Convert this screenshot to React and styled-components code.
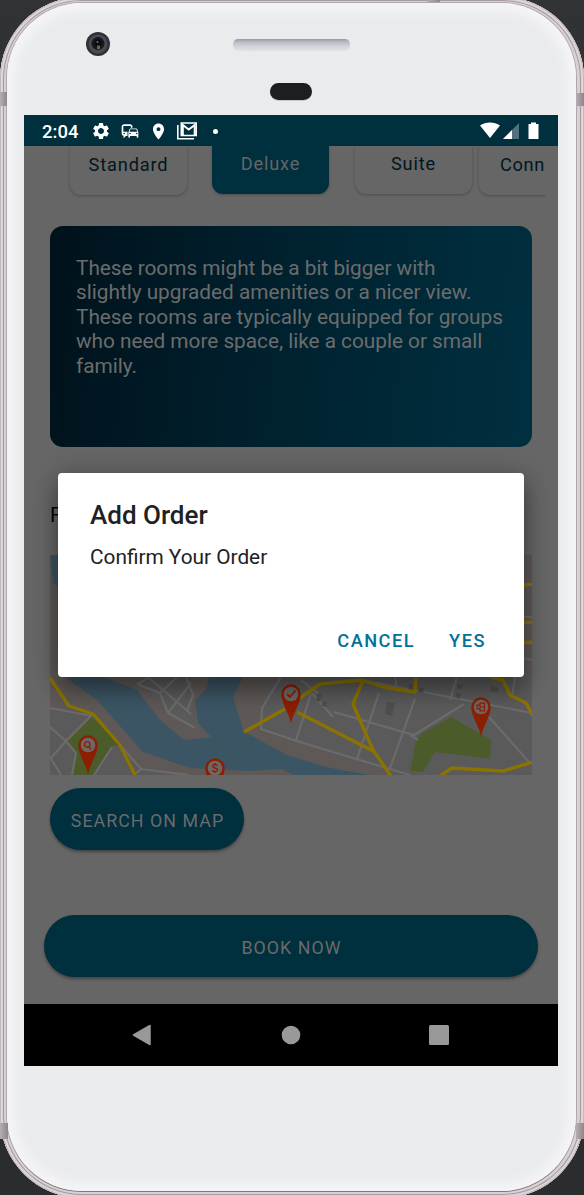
import React from "react";
import styled, { createGlobalStyle } from "styled-components";
import { MdSettings, MdCommute, MdLocationOn } from "react-icons/md";

const GlobalStyle = createGlobalStyle`
  * { box-sizing: border-box; }
  body { margin: 0; background: linear-gradient(#303233, #2a2c2d); font-family: Roboto, "Liberation Sans", sans-serif; }
`;

const Stage = styled.main`
  position: relative;
  width: 584px;
  height: 1195px;
  overflow: hidden;
`;

const Rim = styled.div`
  width: 584px;
  height: 1201px;
  margin-top: -3px;
  padding: 6px 8px 7px 7px;
  border-radius: 82px;
  background: #d8d1d4;
  box-shadow: inset 0 0 0 1px #c0b8bc, inset 0 0 2px 2px #e4dee1, inset 0 0 0 3px #d5ced1, inset 0 0 0 4px #a0969c;
`;

const Face = styled.div`
  height: 100%;
  padding: 0 17px;
  border-radius: 75px;
  background: #eaebed;
  box-shadow: 0 1px 0 0 #82787e, 0 0 0 1px #b0a7ac, inset 0 0 11px 8px #f5f5f8;
  display: flex;
  flex-direction: column;
`;

const Forehead = styled.div`
  position: relative;
  flex: 0 0 112px;
`;

const Camera = styled.svg`
  position: absolute;
  left: 61px;
  top: 28px;
`;

const Speaker = styled.div`
  position: absolute;
  left: 209px;
  top: 36px;
  width: 117px;
  height: 11px;
  border-radius: 5px;
  background: linear-gradient(#959aa4, #b9bdc5 30%, #d0d3d9 65%, #dcdee2);
  box-shadow: 0 1px 1px #dfe1e4;
`;

const Sensor = styled.div`
  position: absolute;
  left: 246px;
  top: 80px;
  width: 42px;
  height: 17px;
  border-radius: 9px;
  background: #1d1e21;
  box-shadow: 0 1px 0 #c5c6c9;
`;

const Band = styled.span`
  position: absolute;
  left: ${(p) => p.$x}px;
  top: ${(p) => p.$y}px;
  width: ${(p) => p.$w}px;
  height: ${(p) => p.$h}px;
  background: linear-gradient(90deg, #b5adb2, #8f868c);
`;

const Screen = styled.section`
  position: relative;
  height: 951px;
  width: 534px;
  flex: none;
  background: #666;
  overflow: hidden;
  display: flex;
  flex-direction: column;
`;

const StatusBar = styled.header`
  flex: 0 0 31px;
  height: 31px;
  background: #002f3e;
  color: #fff;
  display: flex;
  align-items: center;
  padding: 0 19px 0 18px;
  font-size: 18.5px;
  font-weight: 500;
`;

const Clock = styled.span`
  width: 49px;
  line-height: 27px;
  padding-top: 4px;
`;

const StatusIcons = styled.div`
  display: flex;
  align-items: center;
  gap: 9px;
  flex: 1;
  padding-top: 1px;
`;

const Dot = styled.i`
  width: 5px;
  height: 5px;
  border-radius: 50%;
  background: #fff;
  margin-left: 7px;
`;

const Tabs = styled.nav`
  display: flex;
  flex: 0 0 60px;
  align-items: flex-start;
  width: 521px;
  padding-left: 46px;
  overflow: hidden;
`;

const Tab = styled.div`
  flex: 0 0 117px;
  height: ${(p) => p.$h}px;
  margin-right: ${(p) => p.$gap}px;
  padding-top: ${(p) => p.$h - 41}px;
  border-radius: 0 0 11px 11px;
  text-align: center;
  font-size: 18.2px;
  line-height: 22px;
  letter-spacing: 0.85px;
  color: ${(p) => (p.$active ? "#666" : "#001620")};
  background: ${(p) => (p.$active ? "#002f3e" : "#666")};
  box-shadow: 0 1px 3px rgba(0, 0, 0, 0.25);
`;

const PeekTab = styled(Tab)`
  padding-left: 21px;
  text-align: left;
  letter-spacing: 0.65px;
`;

const Description = styled.p`
  margin: 20px 26px 0;
  flex: 0 0 221px;
  padding: 30px 0 0 26px;
  border-radius: 13px;
  background: linear-gradient(96deg, #00121b, #002230 50%, #003040);
  color: #6b6c6c;
  font-size: 20.8px;
  line-height: 24.45px;
  letter-spacing: -0.02px;
  white-space: nowrap;
`;

const SectionTitle = styled.h2`
  margin: 56px 26px 0;
  flex: 0 0 52px;
  font-size: 20.8px;
  line-height: 24px;
  font-weight: 400;
  color: #050505;
`;

const MapPicture = styled.svg`
  flex: none;
  margin-left: 26px;
  display: block;
`;

const PillButton = styled.button`
  flex: none;
  width: ${(p) => p.$w}px;
  height: ${(p) => p.$h}px;
  margin: ${(p) => p.$m};
  padding: 2px 0 0 1px;
  border: 0;
  border-radius: 32px;
  background: #002f3e;
  color: #6a6b6c;
  font: 400 17.8px Roboto, sans-serif;
  letter-spacing: 1.05px;
  white-space: nowrap;
  box-shadow: 0 2px 3px rgba(0, 0, 0, 0.35);
`;

const NavBar = styled.footer`
  margin-top: auto;
  flex: 0 0 62px;
  background: #000;
  display: flex;
  align-items: center;
  justify-content: space-between;
  padding: 0 109px 0 108px;
`;

const Dialog = styled.div`
  position: absolute;
  left: 34px;
  top: 358px;
  width: 466px;
  height: 204px;
  padding: 26px 32px 0;
  border-radius: 4px;
  background: #fff;
  color: #212121;
  box-shadow: 0 14px 22px rgba(0, 0, 0, 0.33), 0 0 28px rgba(0, 0, 0, 0.2);
  display: flex;
  flex-direction: column;
`;

const DialogTitle = styled.h1`
  margin: 0;
  font-size: 26px;
  line-height: 32px;
  font-weight: 500;
`;

const DialogText = styled.p`
  margin: 13px 0 0;
  font-size: 20.8px;
  line-height: 26px;
`;

const DialogActions = styled.div`
  display: flex;
  justify-content: flex-end;
  gap: 34px;
  margin-top: 59px;
  padding-right: 6px;
`;

const TextButton = styled.button`
  border: 0;
  padding: 0;
  background: none;
  color: #00729a;
  font: 500 18.2px/24px Roboto, sans-serif;
  letter-spacing: 1.5px;
`;

function Pin({ x, y, children }) {
  return (
    <g transform={`translate(${x} ${y})`}>
      <path d="M0 29.5 C-2 19 -9.7 9 -9.7 0 A9.7 9.7 0 0 1 9.7 0 C9.7 9 2 19 0 29.5Z" fill="#8c1e02" />
      <circle r="7.300" fill="#6c6866" />
      <g fill="none" stroke="#8c1e02" strokeWidth="1.400">{children}</g>
    </g>
  );
}

function CityMap() {
  return (
    <MapPicture width="482" height="220" viewBox="50 555 482 220">
      <path fill="#5e5956" d="M50 555H532V775H50Z" />
      <path fill="#5b5a5a" d="M50 707L93 716 66 740 76 753 72 775H50Z M111 746L120 748 132 775H93Z M137 677H188L195 729 167 714Z M262 684L282 677H532V775H391L260 728Z M141 769L190 775H139Z" />
      <path fill="#3c5564" d="M50 555H62V589L53 583Z M65 677L97 700 143 752 190 768 250 771 282 769 293 775H370L330 768 287 755 244 732 233 697 243 677H209L207 688 195 701 198 723 211 737 184 740 160 720 137 690 103 677Z" />
      <path fill="#4b5b2a" d="M91 716L66 740 76 753 72 775H93L112 746 120 745Z M416 740L423 733 451 717 491 740 490 759 435 752 423 772 410 771Z" />
      <g fill="none" stroke="#6b6b6b" strokeWidth="2.200">
        <path d="M50 708L92 716M50 727L66 741 50 759M66 741L76 753 72 775M50 757L61 775M91 716L66 741M94 775L112 747M121 746L141 769 134 775M141 769L189 775" />
        <path d="M137 684L150 677M137 684L160 693 168 713 195 728M160 693L177 677M168 713L191 683M148 677L191 714M186 677L193 695 187 711" />
        <path d="M281 677L262 708 261 729 291 739M290 739L373 764 410 775M296 740L311 694M357 759L379 693M390 768L415 699M334 712L414 735 464 704M312 693L333 717M361 680L532 713M450 700L457 677M512 697L515 677M301 680L320 695M489 717L529 762M395 677L397 687M410 735L418 740M523 617H532M523 658L532 660" />
      </g>
      <path fill="#4e4e4e" d="M318 693L322 694 320 702 316 700Z M323 701L327 702 326 707 322 706Z M387 702L395 703 392 716 385 714Z M419 687L424 688 423 693 418 692Z M409 684L413 685V690L408 689Z M458 684L463 685 462 689 457 688Z M457 693L461 694 460 699 455 697Z M491 686L499 688 497 693 490 691Z" />
      <g fill="none" stroke="#8a7300" strokeWidth="3.400" strokeLinejoin="round">
        <path d="M50 678L69 706 93 714 120 745 135 775M244 732L285 709M300 698L320 684 362 680 383 687 415 692 416 677M363 680L353 704 373 750 391 776M297 712L373 751M490 677L503 680 510 695 526 703 533 716M440 776L452 768 503 771 533 762M523 585L533 584M523 622.500H533M523 642.500H533" />
      </g>
      <Pin x={88} y={745}>
        <circle cx="-.8" cy="-.6" r="2.800" /><path d="M1 1.500L3 4.500" />
      </Pin>
      <Pin x={215} y={768}>
        <path d="M2.600-2.400C1.500-3.800-2.400-3.500-2.200-1.400C-2 .5 2.600-.4 2.500 2C2.300 4-1.700 4-2.800 2.500M0-5V-3M0 3V5" />
      </Pin>
      <Pin x={291} y={694}><path strokeWidth="1.800" d="M-4 0L-1 3 4.500-3.500" /></Pin>
      <Pin x={481} y={707}><path strokeWidth="1.200" d="M-1-3.800H3.500V3.800H-1ZM-1-1.800H-4V1.800H-1M-1 0H3.500" /></Pin>
    </MapPicture>
  );
}

function StackedMailIcon() {
  return (
    <svg width="20" height="18" viewBox="0 0 20 18" fill="none" stroke="#fff" strokeWidth="1.600">
      <path d="M.8 3V16.700H17" />
      <path d="M4.300 1H19.200V13.500H4.300Z" />
      <path d="M5.800 13V3L11.750 7.500 17.700 3V13" strokeWidth="2" />
    </svg>
  );
}

function SystemIcons() {
  return (
    <svg width="59" height="18" viewBox="0 0 59 18" fill="#fff">
      <path d="M0 3.500C5.500-.6 14.500-.6 20 3.500L10 16Z" />
      <path d="M39 1V17H23Z" opacity=".32" />
      <path d="M32 8V17H23Z" />
      <path d="M51 .5H56V2H58.500V17H48.500V2H51Z" />
    </svg>
  );
}

function CameraLens() {
  return (
    <Camera width="26" height="26" viewBox="0 0 26 26">
      <circle cx="13" cy="13" r="12" fill="#303136" />
      <circle cx="13" cy="13" r="9.500" fill="#4b4c51" />
      <circle cx="13" cy="12.500" r="6.500" fill="#17181d" />
      <circle cx="13" cy="12" r="3.500" fill="#080a12" />
      <circle cx="12.500" cy="11" r="1" fill="#6c7188" />
      <path d="M12 14.500H15V18H12Z" fill="#6e692f" />
    </Camera>
  );
}

export default function App() {
  return (
    <Stage>
      <GlobalStyle />
      <Rim>
        <Face>
          <Forehead>
            <CameraLens />
            <Speaker />
            <Sensor />
          </Forehead>
          <Screen>
            <StatusBar>
              <Clock>2:04</Clock>
              <StatusIcons>
                <MdSettings size={20} />
                <MdCommute size={20} />
                <MdLocationOn size={19} />
                <StackedMailIcon />
                <Dot />
              </StatusIcons>
              <SystemIcons />
            </StatusBar>
            <Tabs>
              <Tab $h={49} $gap={25}>Standard</Tab>
              <Tab $h={48} $gap={26} $active>Deluxe</Tab>
              <Tab $h={48} $gap={7}>Suite</Tab>
              <PeekTab $h={49} $gap={0}>Conn</PeekTab>
            </Tabs>
            <Description>
              These rooms might be a bit bigger with<br />
              slightly upgraded amenities or a nicer view.<br />
              These rooms are typically equipped for groups<br />
              who need more space, like a couple or small<br />
              family.
            </Description>
            <SectionTitle>F</SectionTitle>
            <CityMap />
            <PillButton $w={194} $h={62} $m="13px 0 0 26px">SEARCH ON MAP</PillButton>
            <PillButton $w={494} $h={62} $m="65px 0 0 20px">BOOK NOW</PillButton>
            <NavBar>
              <svg width="20" height="22" viewBox="0 0 20 22"><path d="M18 1.500V20.500L1.500 11Z" fill="#999" stroke="#999" strokeWidth="1.500" strokeLinejoin="round" /></svg>
              <svg width="20" height="20" viewBox="0 0 20 20"><circle cx="10" cy="10" r="9.300" fill="#999" /></svg>
              <svg width="20" height="20" viewBox="0 0 20 20"><rect width="20" height="20" rx="1.500" fill="#999" /></svg>
            </NavBar>
            <Dialog role="dialog">
              <DialogTitle>Add Order</DialogTitle>
              <DialogText>Confirm Your Order</DialogText>
              <DialogActions>
                <TextButton>CANCEL</TextButton>
                <TextButton>YES</TextButton>
              </DialogActions>
            </Dialog>
          </Screen>
        </Face>
      </Rim>
      <Band $x={0} $y={92} $w={7} $h={14} />
      <Band $x={576} $y={93} $w={8} $h={13} />
      <Band $x={427} $y={0} $w={13} $h={2} />
      <Band $x={0} $y={1123} $w={8} $h={16} />
      <Band $x={576} $y={1123} $w={8} $h={16} />
    </Stage>
  );
}
